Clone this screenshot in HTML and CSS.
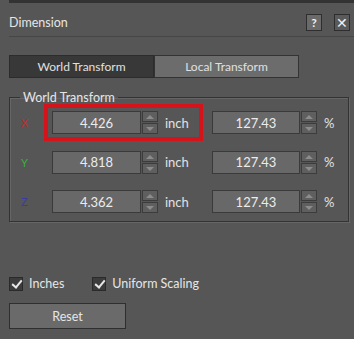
FILE: index.html
```html
<!DOCTYPE html>
<html lang="en">
<head>
  <meta charset="UTF-8">
  <meta name="viewport" content="width=device-width, initial-scale=1.0">
  <title>Dimension</title>
  <link rel="stylesheet" href="styles.css">
</head>
<body>
  <div class="dialog">
    <div class="titlebar">
      <span class="title">Dimension</span>
      <button class="title-btn help">?</button>
      <button class="title-btn close">&#x2715;</button>
    </div>

    <div class="tabs">
      <button class="tab active">World Transform</button>
      <button class="tab">Local Transform</button>
    </div>

    <fieldset class="group">
      <legend>World Transform</legend>

      <div class="row">
        <span class="axis axis-x">X</span>
        <div class="spin">
          <input type="text" value="4.426">
          <div class="arrows"><span class="up"></span><span class="down"></span></div>
        </div>
        <span class="unit">inch</span>
        <div class="spin spin-pct">
          <input type="text" value="127.43">
          <div class="arrows"><span class="up"></span><span class="down"></span></div>
        </div>
        <span class="unit">%</span>
        <div class="highlight"></div>
      </div>

      <div class="row">
        <span class="axis axis-y">Y</span>
        <div class="spin">
          <input type="text" value="4.818">
          <div class="arrows"><span class="up"></span><span class="down"></span></div>
        </div>
        <span class="unit">inch</span>
        <div class="spin spin-pct">
          <input type="text" value="127.43">
          <div class="arrows"><span class="up"></span><span class="down"></span></div>
        </div>
        <span class="unit">%</span>
      </div>

      <div class="row">
        <span class="axis axis-z">Z</span>
        <div class="spin">
          <input type="text" value="4.362">
          <div class="arrows"><span class="up"></span><span class="down"></span></div>
        </div>
        <span class="unit">inch</span>
        <div class="spin spin-pct">
          <input type="text" value="127.43">
          <div class="arrows"><span class="up"></span><span class="down"></span></div>
        </div>
        <span class="unit">%</span>
      </div>
    </fieldset>

    <div class="options">
      <label class="check"><input type="checkbox" checked> Inches</label>
      <label class="check"><input type="checkbox" checked> Uniform Scaling</label>
    </div>

    <button class="btn-reset">Reset</button>
  </div>
</body>
</html>
```

FILE: styles.css
```css
* {
  box-sizing: border-box;
  margin: 0;
  padding: 0;
}

body {
  font-family: Lato, "Open Sans", sans-serif;
  font-size: 12px;
  background-color: #565656;
  color: #e2e2e2;
  width: 354px;
  height: 339px;
  overflow: hidden;
}

.dialog {
  display: flex;
  flex-direction: column;
  height: 100%;
}

/* Title bar */
.titlebar {
  display: flex;
  align-items: center;
  height: 37px;
  padding: 6px 4px 0 0;
  margin-left: 9px;
  border-top: 3px solid #333;
  border-bottom: 1px solid #464646;
}

.title {
  flex: 1;
  font-size: 12.5px;
  color: #e6e6e6;
}

.title-btn {
  width: 16px;
  height: 17px;
  font-family: inherit;
  font-size: 12px;
  font-weight: bold;
  color: #f0f0f0;
  border: 1px solid #2e2e2e;
  background: #6a6a6a;
  display: flex;
  align-items: center;
  justify-content: center;
}

.title-btn.close {
  margin-left: 12px;
  background: #5a5a5a;
  font-size: 14px;
  font-weight: normal;
}

/* Tabs */
.tabs {
  display: flex;
  margin: 18px 0 0 9px;
  width: 290px;
}

.tab {
  flex: 1;
  height: 23px;
  font-family: inherit;
  font-size: 12px;
  color: #e0e0e0;
  background: #6c6c6c;
  border: 1px solid #333;
}

.tab.active {
  background: #383838;
  border-color: #2c2c2c;
}

/* Group box */
.group {
  margin: 12px 5px 0 9px;
  padding: 6px 0 8px 0;
  border: 1px solid #333;
  box-shadow: 1px 1px 0 #666, inset 1px 1px 0 #666;
  display: flex;
  flex-direction: column;
  gap: 16.5px;
}

.group legend {
  margin-left: 10px;
  padding: 0 3px;
  font-size: 12.5px;
  color: #e6e6e6;
  line-height: 15px;
}

.row {
  position: relative;
  display: flex;
  align-items: center;
  height: 23px;
}

.axis {
  width: 42px;
  padding-left: 11px;
  font-size: 11px;
}

.axis-x { color: #c42a2a; }
.axis-y { color: #3fae3f; }
.axis-z { color: #3a3aa8; }

.spin {
  display: flex;
  height: 23px;
  width: 106px;
}

.spin-pct {
  width: 105px;
}

.spin input {
  flex: 1;
  min-width: 0;
  height: 23px;
  border: 1px solid #3a3a3a;
  background: #686868;
  color: #ececec;
  font-family: inherit;
  font-size: 13px;
  text-align: center;
}

.arrows {
  width: 16px;
  display: flex;
  flex-direction: column;
  gap: 1px;
  margin-left: 1px;
}

.arrows span {
  flex: 1;
  background: #5f5f5f;
  border: 1px solid #3c3c3c;
  position: relative;
}

.arrows span::after {
  content: "";
  position: absolute;
  left: 3px;
  border-left: 4px solid transparent;
  border-right: 4px solid transparent;
}

.arrows .up::after {
  top: 3px;
  border-bottom: 4px solid #8c8c8c;
}

.arrows .down::after {
  top: 3px;
  border-top: 4px solid #8c8c8c;
}

.unit {
  width: 54px;
  padding-left: 7px;
  font-size: 13px;
}

.row .unit:last-of-type {
  width: auto;
}

/* Red annotation box around the X value */
.highlight {
  position: absolute;
  left: 34px;
  top: -7px;
  width: 159px;
  height: 37px;
  border: 4px solid #d4141a;
}

/* Options */
.options {
  display: flex;
  gap: 28px;
  margin: 54px 0 0 9px;
}

.check {
  display: flex;
  align-items: center;
  gap: 6px;
  font-size: 12.5px;
  color: #e6e6e6;
}

.check input[type="checkbox"] {
  appearance: none;
  -webkit-appearance: none;
  width: 14px;
  height: 14px;
  background: #3c3c3c;
  border: 1px solid #2a2a2a;
  position: relative;
}

.check input[type="checkbox"]:checked::before {
  content: "";
  position: absolute;
  left: 4px;
  top: 0;
  width: 4px;
  height: 8px;
  border-right: 2px solid #e8e8e8;
  border-bottom: 2px solid #e8e8e8;
  transform: rotate(40deg);
}

.btn-reset {
  width: 117px;
  height: 26px;
  margin: 12px 0 0 9px;
  font-family: inherit;
  font-size: 12.5px;
  color: #e6e6e6;
  background: #6a6a6a;
  border: 1px solid #2f2f2f;
}
```
